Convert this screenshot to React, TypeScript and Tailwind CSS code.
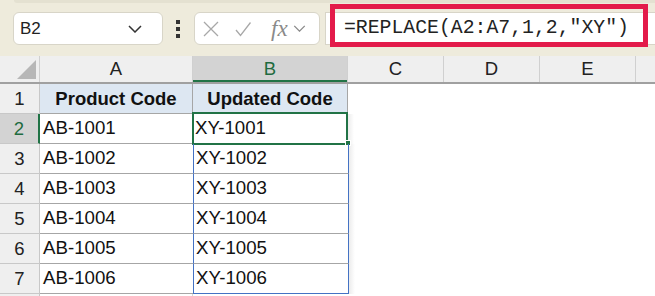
import { Fragment } from 'react'

const rows = [
  ['AB-1001', 'XY-1001'],
  ['AB-1002', 'XY-1002'],
  ['AB-1003', 'XY-1003'],
  ['AB-1004', 'XY-1004'],
  ['AB-1005', 'XY-1005'],
  ['AB-1006', 'XY-1006'],
]

const cols = [
  { key: 'A', w: 'w-[153px]' },
  { key: 'B', w: 'w-[155px]' },
  { key: 'C', w: 'w-[96px]' },
  { key: 'D', w: 'w-[96px]' },
  { key: 'E', w: 'w-[96px]' },
]

function Chevron({ className }: { className?: string }) {
  return (
    <svg viewBox="0 0 14 8" className={className} fill="none" stroke="currentColor" strokeWidth="1.5">
      <path d="M1 1l6 6 6-6" />
    </svg>
  )
}

function Toolbar() {
  return (
    <div className="relative flex h-[56px] items-start bg-[#eeebdc]">
      <div className="absolute left-[14px] right-0 top-0 h-[3px] rounded-bl-[6px] bg-[#e4e1d1]" />

      {/* Name box */}
      <div className="ml-[13px] mt-[12px] flex h-[33px] w-[150px] items-center justify-between rounded-[6px] border border-[#d8d5c8] bg-white pl-[6px] pr-[20px]">
        <span className="text-[17px] text-[#222]">B2</span>
        <Chevron className="h-[8px] w-[14px] text-[#333]" />
      </div>

      {/* Dots */}
      <div className="ml-[13px] mt-[20px] flex flex-col gap-[3px]">
        <span className="h-[4px] w-[4px] bg-[#333]" />
        <span className="h-[4px] w-[4px] bg-[#333]" />
        <span className="h-[4px] w-[4px] bg-[#333]" />
      </div>

      {/* Formula buttons */}
      <div className="ml-[14px] mt-[12px] flex h-[33px] w-[126px] items-center rounded-[6px] border border-[#d8d5c8] bg-white pl-[8px]">
        <svg viewBox="0 0 16 16" className="h-[16px] w-[16px] text-[#a8a8a8]" fill="none" stroke="currentColor" strokeWidth="1.3">
          <path d="M1 1l14 14M15 1L1 15" />
        </svg>
        <svg viewBox="0 0 16 16" className="ml-[16px] h-[16px] w-[16px] text-[#a8a8a8]" fill="none" stroke="currentColor" strokeWidth="1.3">
          <path d="M1 9l4.5 5.5L15.5 1.5" />
        </svg>
        <span className="ml-[20px] font-['Liberation_Serif',serif] text-[23px] italic leading-none text-[#8a8a8a]">fx</span>
        <Chevron className="ml-[5px] h-[7px] w-[13px] text-[#8a8a8a]" />
      </div>

      {/* Formula bar */}
      <div className="relative ml-[5px] mt-[12px] flex h-[33px] flex-1 items-center border-y border-l border-[#d8d5c8] bg-white pl-[18px]">
        <span className="font-['Liberation_Mono',monospace] text-[19.8px] leading-none text-[#222]">
          =REPLACE(A2:A7,1,2,"XY")
        </span>
      </div>

      {/* Highlight annotation */}
      <div className="absolute left-[330px] top-[4px] h-[43px] w-[318px] border-[5px] border-[#e31b4a]" />
    </div>
  )
}

function Sheet() {
  return (
    <div className="relative bg-white">
      {/* Column header */}
      <div className="flex h-[28px] border-b-2 border-[#a0a0a0] bg-[#efefef]">
        <div className="relative h-full w-[40px] border-r border-[#d0d0d0]">
          <svg viewBox="0 0 20 20" className="absolute bottom-[3px] right-[3px] h-[19px] w-[19px]">
            <path d="M20 0V20H0Z" fill="#b7b7b7" />
          </svg>
        </div>
        {cols.map((c) => (
          <div
            key={c.key}
            className={`${c.w} flex h-full items-center justify-center border-r border-[#d0d0d0] text-[18.5px] ${
              c.key === 'B' ? 'bg-[#d3d3d3] text-[#1f6b40] shadow-[inset_0_-2px_0_#217346]' : 'text-[#222]'
            }`}
          >
            {c.key}
          </div>
        ))}
        <div className="flex-1" />
      </div>

      {/* Body */}
      <div className="relative">
        {/* Row 1 */}
        <div className="flex h-[30px]">
          <div className="flex w-[40px] items-center justify-center border-b border-r border-[#c8c8c8] bg-[#efefef] text-[18.5px] text-[#222]">
            1
          </div>
          <div className="flex w-[153px] items-center justify-center border-b border-r border-[#a6a6a6] bg-[#dde7f2] text-[18.5px] font-bold text-[#111]">
            Product Code
          </div>
          <div className="flex w-[155px] items-center justify-center border-b border-r border-[#a6a6a6] bg-[#dde7f2] text-[18.5px] font-bold text-[#111]">
            Updated Code
          </div>
          <div className="flex-1" />
        </div>

        {rows.map(([a, b], i) => {
          const n = i + 2
          const selected = n === 2
          return (
            <Fragment key={n}>
              <div className="flex h-[30px]">
                <div
                  className={`flex w-[40px] items-center justify-center border-b border-[#c8c8c8] text-[18.5px] ${
                    selected
                      ? 'border-r-2 border-r-[#217346] bg-[#d3d3d3] text-[#1f6b40]'
                      : 'border-r border-r-[#c8c8c8] bg-[#efefef] text-[#222]'
                  }`}
                >
                  {n}
                </div>
                <div className={`flex ${selected ? 'w-[152px]' : 'w-[153px]'} items-center border-b border-[#a6a6a6] pl-[3px] text-[18.7px] text-[#111]`}>
                  {a}
                </div>
                <div
                  className={`relative flex w-[156px] items-center border-x border-b border-x-[#4472c4] pl-[2px] text-[18.7px] text-[#111] ${
                    n === 7 ? 'border-b-[#4472c4]' : 'border-b-[#a6a6a6]'
                  }`}
                >
                  {b}
                  {selected && (
                    <>
                      <div className="absolute -left-[1px] -top-[2px] h-[33px] w-[156px] border-2 border-[#217346]" />
                      <div className="absolute -bottom-[3px] -right-[4px] h-[6px] w-[6px] border border-white bg-[#217346]" />
                    </>
                  )}
                </div>
                <div className="w-[6px] bg-gradient-to-r from-[#ececec] to-white" />
                <div className="flex-1" />
              </div>
            </Fragment>
          )
        })}
        <div className="flex h-[4px]">
          <div className="w-[40px] border-r border-[#c8c8c8] bg-[#efefef]" />
          <div className="w-[153px] border-r border-[#d8d8d8]" />
        </div>
      </div>
    </div>
  )
}

export default function App() {
  return (
    <div className="h-[296px] w-[655px] overflow-hidden bg-white font-['Liberation_Sans',Arial,sans-serif]">
      <Toolbar />
      <Sheet />
    </div>
  )
}
